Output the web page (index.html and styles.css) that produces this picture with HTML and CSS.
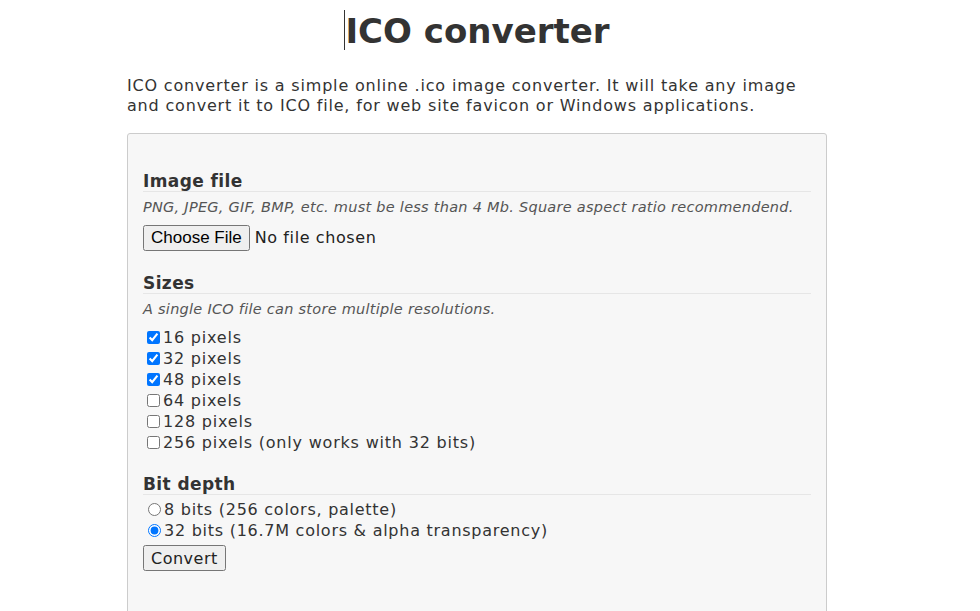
FILE: index.html
```html
<!DOCTYPE html>
<html>
<head>
<meta charset="utf-8">
<link rel="stylesheet" href="styles.css">
</head>
<body>
<div class="page">
  <h1 class="title"><span class="caret"></span>ICO converter</h1>
  <p class="intro">ICO converter is a simple online .ico image converter. It will take any image and convert it to ICO file, for web site favicon or Windows applications.</p>
  <form class="panel">
    <div class="section">
      <h2 class="heading">Image file</h2>
      <p class="hint">PNG, JPEG, GIF, BMP, etc. must be less than 4 Mb. Square aspect ratio recommendend.</p>
      <input class="file" type="file">
    </div>
    <div class="section">
      <h2 class="heading">Sizes</h2>
      <p class="hint">A single ICO file can store multiple resolutions.</p>
      <div class="options">
        <label class="opt"><input type="checkbox" checked>16 pixels</label>
        <label class="opt"><input type="checkbox" checked>32 pixels</label>
        <label class="opt"><input type="checkbox" checked>48 pixels</label>
        <label class="opt"><input type="checkbox">64 pixels</label>
        <label class="opt"><input type="checkbox">128 pixels</label>
        <label class="opt"><input type="checkbox">256 pixels (only works with 32 bits)</label>
      </div>
    </div>
    <div class="section section-last">
      <h2 class="heading">Bit depth</h2>
      <div class="options radios">
        <label class="opt"><input type="radio" name="bpp">8 bits (256 colors, palette)</label>
        <label class="opt"><input type="radio" name="bpp" checked>32 bits (16.7M colors &amp; alpha transparency)</label>
      </div>
      <button class="convert" type="button">Convert</button>
    </div>
  </form>
</div>
</body>
</html>
```
FILE: styles.css
```css
html, body {
  margin: 0;
  padding: 0;
  background: #fff;
}
body {
  font-family: "DejaVu Sans", Verdana, sans-serif;
  color: #333;
  font-size: 16px;
}
.page {
  width: 700px;
  margin-left: 127px;
}
.title {
  margin: 0;
  padding-top: 10px;
  height: 50px;
  text-align: center;
  font-size: 34px;
  line-height: 42px;
  font-weight: bold;
}
.caret {
  display: inline-block;
  width: 1px;
  height: 40px;
  background: #333;
  vertical-align: top;
}
.intro {
  margin: 16px 0 0 0;
  font-size: 16px;
  line-height: 20px;
  letter-spacing: 0.82px;
}
.panel {
  margin-top: 17px;
  background: #f7f7f7;
  border: 1px solid #ccc;
  border-radius: 3px;
  padding: 16px 15px 60px 15px;
  height: 600px;
}
.section {
  display: flex;
  flex-direction: column;
  align-items: flex-start;
  margin-top: 22px;
}
.section:first-child {
  margin-top: 21px;
}
.section-last {
  margin-top: 21px;
}
.heading {
  align-self: stretch;
  margin: 0;
  font-size: 17px;
  line-height: 20px;
  font-weight: bold;
  letter-spacing: 0.4px;
  border-bottom: 1px solid #e6e6e6;
}
.hint {
  margin: 5px 0 0 0;
  font-size: 14.5px;
  line-height: 20px;
  font-style: italic;
  color: #555;
  letter-spacing: 0.26px;
}
.file {
  margin-top: 8px;
  font-family: "DejaVu Sans", Verdana, sans-serif;
  font-size: 16px;
  letter-spacing: 0.6px;
  color: #222;
}
.file::file-selector-button {
  font-family: "Liberation Sans", Arial, sans-serif;
  font-size: 17px;
  letter-spacing: 0;
  height: 26px;
  padding: 0 6px;
  margin-right: 5px;
}
.options {
  display: flex;
  flex-direction: column;
  margin-top: 8px;
}
.radios {
  margin-top: 4px;
}
.opt {
  display: flex;
  align-items: center;
  height: 21px;
  font-size: 16px;
  line-height: 21px;
  letter-spacing: 0.8px;
}
.opt input {
  margin: 0 3px 0 4px;
}
.radios .opt input {
  margin: 0 3px 0 5px;
}
.radios .opt {
  letter-spacing: 0.74px;
}
.convert {
  margin-top: 4px;
  font-family: "DejaVu Sans", Verdana, sans-serif;
  font-size: 16px;
  letter-spacing: 0.5px;
  color: #222;
  height: 26px;
  padding: 0 6px;
}
```
